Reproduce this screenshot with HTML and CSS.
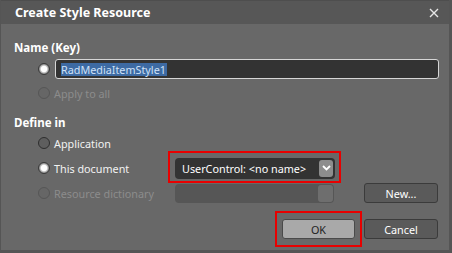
FILE: index.html
```html
<!DOCTYPE html>
<html lang="en">
<head>
    <meta charset="UTF-8">
    <title>Create Style Resource</title>
    <link rel="stylesheet" href="styles.css">
</head>
<body>
    <div class="dialogo">
        <div class="titulo">
            <span>Create Style Resource</span>
            <svg class="cerrar" width="10" height="10" viewBox="0 0 10 10">
                <path d="M1 1L9 9M9 1L1 9" stroke="#e6e6e6" stroke-width="1.4"/>
            </svg>
        </div>
        <div class="contenido">
            <div class="seccion">Name (Key)</div>
            <div class="fila fila-nombre">
                <span class="radio activo"></span>
                <div class="caja"><span class="seleccion">RadMediaItemStyle1</span></div>
            </div>
            <div class="fila">
                <span class="radio apagado"></span>
                <span class="texto apagado-texto">Apply to all</span>
            </div>

            <div class="seccion seccion-define">Define in</div>
            <div class="fila">
                <span class="radio"></span>
                <span class="texto">Application</span>
            </div>
            <div class="fila fila-doc">
                <span class="radio activo"></span>
                <span class="texto etiqueta">This document</span>
                <div class="marca marca-combo">
                    <div class="combo">
                        <span>UserControl: &lt;no name&gt;</span>
                        <span class="flecha">
                            <svg width="9" height="6" viewBox="0 0 9 6">
                                <path d="M1 1L4.5 4.5L8 1" stroke="#fff" stroke-width="1.8" fill="none"/>
                            </svg>
                        </span>
                    </div>
                </div>
            </div>
            <div class="fila">
                <span class="radio apagado"></span>
                <span class="texto etiqueta apagado-texto">Resource dictionary</span>
                <div class="combo combo-apagado"><span class="flecha"></span></div>
                <button class="boton">New...</button>
            </div>

            <div class="botones">
                <div class="marca marca-ok">
                    <button class="boton boton-ok">OK</button>
                </div>
                <button class="boton">Cancel</button>
            </div>
        </div>
    </div>
</body>
</html>
```

FILE: styles.css
```css
*{
    margin: 0;
    padding: 0;
    box-sizing: border-box;
}
body{
    width: 452px;
    height: 253px;
    background: #555;
    font-family: "Noto Sans", "Open Sans", sans-serif;
    font-size: 10.8px;
    color: #f2f2f2;
    overflow: hidden;
}
.dialogo{
    width: 448px;
    height: 250px;
    margin-left: 1px;
    background: #686868;
    display: flex;
    flex-direction: column;
}
.titulo{
    height: 24px;
    background: #575757;
    border-top: 1px solid #4e4e4e;
    display: flex;
    align-items: center;
    justify-content: space-between;
    padding: 0 10px 0 14px;
    font-weight: bold;
    font-size: 12.5px;
    color: #fff;
}
.cerrar{ margin-top: 1px; }

.contenido{
    padding: 16px 0 0 13px;
    display: flex;
    flex-direction: column;
}
.seccion{
    font-weight: bold;
    font-size: 11.5px;
    height: 16px;
    line-height: 16px;
    color: #fff;
}
.seccion-define{ margin-top: 10px; }

.fila{
    display: flex;
    align-items: center;
    height: 24px;
    padding-left: 24px;
}
.fila-nombre{
    margin-top: 3px;
    height: 20px;
}
.fila-nombre + .fila{ margin-top: 2px; }
.fila-doc{ height: 26px; }

.radio{
    width: 12px;
    height: 12px;
    border-radius: 50%;
    border: 1.5px solid #2e2e2e;
    background: #5e5e5e;
    flex: none;
}
.radio.activo{
    background: radial-gradient(circle, #fff 0 2.8px, #d4d4d4 3.4px, #8c8c8c 4.8px);
    border: 1px solid #3a3a3a;
}
.radio.apagado{
    border: 1.5px solid #565656;
    background: #666;
}
.texto{ margin-left: 4px; }
.etiqueta{ width: 121px; }
.apagado-texto{ color: #8c8c8c; }

.caja{
    margin-left: 5px;
    width: 384px;
    height: 20px;
    background: #333;
    border: 1px solid #d6d6d6;
    border-radius: 3px;
    padding: 0 0 0 5px;
    display: flex;
    align-items: center;
}
.seleccion{
    background: #3d6aa3;
    color: #cfe1f7;
    line-height: 13px;
    padding-right: 1px;
}

.marca{ position: relative; }
.marca::after{
    content: "";
    position: absolute;
    border: 2px solid #e80000;
    pointer-events: none;
}
.marca-combo::after{ inset: -7px -6px -4px -7px; }
.marca-ok::after{ inset: -8px -7px -8px -7px; }

.combo{
    width: 160px;
    height: 21px;
    background: #333;
    border-radius: 4px;
    display: flex;
    align-items: center;
    justify-content: space-between;
    padding: 0 2px 0 7px;
    color: #fff;
}
.flecha{
    width: 14px;
    height: 17px;
    border-radius: 3px;
    background: #8d8d8d;
    display: flex;
    align-items: center;
    justify-content: center;
}
.combo-apagado{
    width: 159px;
    height: 19px;
    background: #565656;
    justify-content: flex-end;
    padding-right: 1px;
}
.combo-apagado .flecha{
    width: 15px;
    background: #6e6e6e;
}

.boton{
    width: 74px;
    height: 20px;
    background: #5a5a5a;
    border: 1px solid #3b3b3b;
    border-radius: 3px;
    color: #fff;
    font-family: inherit;
    font-size: 10.8px;
    margin-left: 30px;
}
.boton-ok{
    width: 73px;
    background: #a9a9a9;
    border-color: #4a4a4a;
    color: #222;
}

.botones{
    display: flex;
    justify-content: flex-end;
    gap: 9px;
    margin-top: 14px;
    padding-right: 11px;
}
.botones .boton{ margin-left: 0; }
```
